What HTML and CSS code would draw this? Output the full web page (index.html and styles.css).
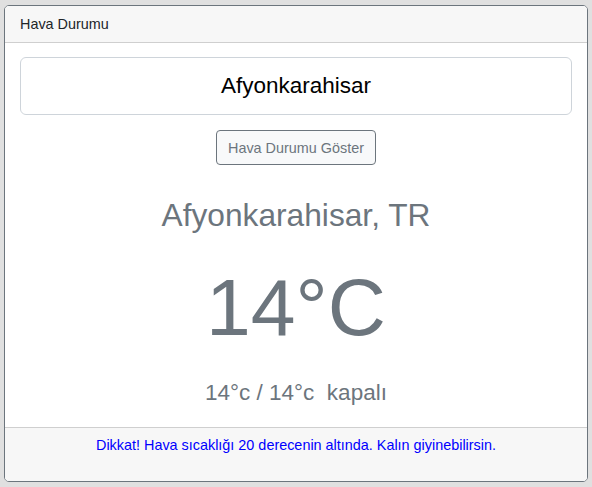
FILE: index.html
```html
<!DOCTYPE html>
<html lang="tr">
<head>
<meta charset="utf-8">
<title>Hava Durumu</title>
<link rel="stylesheet" href="styles.css">
</head>
<body>
<div class="card">
  <div class="card-header">Hava Durumu</div>
  <div class="card-body">
    <input class="city-input" type="text" value="Afyonkarahisar">
    <button class="btn" type="button">Hava Durumu Göster</button>
    <div class="city">Afyonkarahisar, TR</div>
    <div class="temp">14°C</div>
    <div class="detail">14°c / 14°c&nbsp; kapalı</div>
  </div>
  <div class="card-footer">Dikkat! Hava sıcaklığı 20 derecenin altında. Kalın giyinebilirsin.</div>
</div>
</body>
</html>
```

FILE: styles.css
```css
html, body {
  margin: 0;
  padding: 0;
  background: #e0e0e0;
}
body {
  padding: 5px 4px 0 4px;
  font-family: "Liberation Sans", Arial, sans-serif;
}
.card {
  box-sizing: border-box;
  width: 584px;
  height: 477px;
  border: 1px solid #6c757d;
  border-radius: 5px;
  background: #fff;
  display: flex;
  flex-direction: column;
  overflow: hidden;
}
.card-header {
  background: #f7f7f7;
  border-bottom: 1px solid #cfcfcf;
  padding: 8px 15px;
  font-size: 14.4px;
  line-height: 20px;
  color: #212529;
}
.card-body {
  flex: 1;
  padding: 14px 15px 0 15px;
  display: flex;
  flex-direction: column;
  align-items: center;
}
.city-input {
  box-sizing: border-box;
  width: 100%;
  height: 58px;
  border: 1px solid #ced4da;
  border-radius: 6px;
  font-family: "Liberation Sans", Arial, sans-serif;
  font-size: 22.5px;
  text-align: center;
  color: #000;
  background: #fff;
  outline: none;
  margin: 0;
}
.btn {
  margin-top: 15px;
  box-sizing: border-box;
  height: 35px;
  padding: 0 11.5px;
  border: 1px solid #6c757d;
  border-radius: 4px;
  background: #f8f9fa;
  color: #6c757d;
  font-family: "Liberation Sans", Arial, sans-serif;
  font-size: 14.4px;
}
.city {
  margin-top: 31px;
  font-size: 31.7px;
  line-height: 1.2;
  color: #6c757d;
}
.temp {
  margin-top: 25px;
  font-size: 80.5px;
  line-height: 1.2;
  color: #6c757d;
}
.detail {
  margin-top: 23px;
  font-size: 22.5px;
  line-height: 1.2;
  color: #6c757d;
}
.card-footer {
  background: #f7f7f7;
  border-top: 1px solid #cfcfcf;
  padding: 7px 15px 25px 15px;
  height: 54px;
  box-sizing: border-box;
  text-align: center;
  font-size: 14.4px;
  line-height: 21px;
  color: #0000ff;
}
```
